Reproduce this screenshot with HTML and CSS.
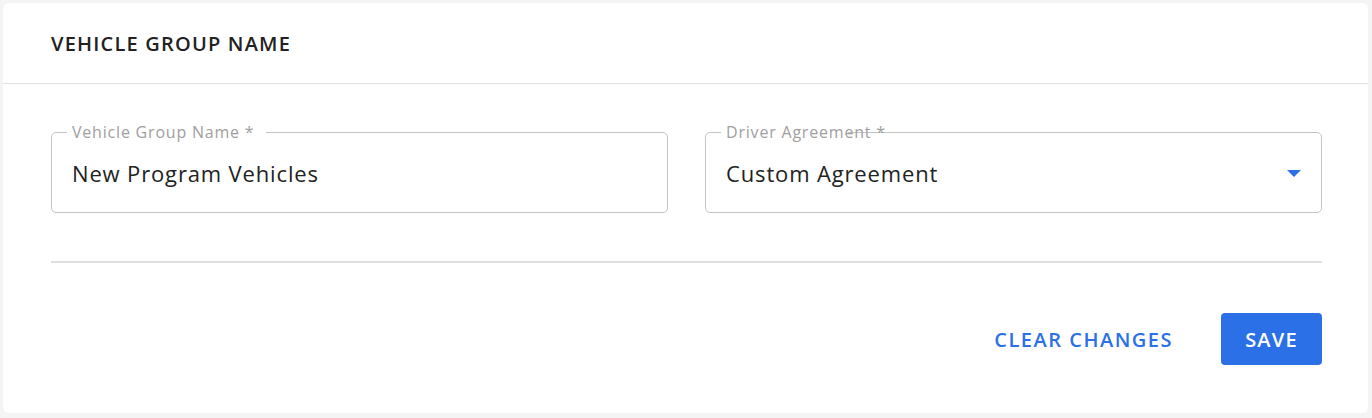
FILE: index.html
```html
<!DOCTYPE html>
<html lang="en">
<head>
  <meta charset="UTF-8">
  <title>Vehicle Group Name</title>
  <link rel="stylesheet" href="styles.css">
</head>
<body>

<div class="card">
  <div class="card-header">
    <h2>Vehicle Group Name</h2>
  </div>

  <div class="card-body">
    <div class="fields">
      <div class="field">
        <span class="notch notch-name"></span>
        <label>Vehicle Group Name *</label>
        <div class="value">New Program Vehicles</div>
      </div>

      <div class="field select">
        <span class="notch notch-driver"></span>
        <label>Driver Agreement *</label>
        <div class="value">Custom Agreement</div>
        <svg class="arrow" width="14" height="7" viewBox="0 0 14 7"><path d="M0 0h14L7 7z" fill="#2b70e7"/></svg>
      </div>
    </div>

    <div class="divider"></div>

    <div class="actions">
      <button class="btn-text">Clear Changes</button>
      <button class="btn-save">Save</button>
    </div>
  </div>
</div>

</body>
</html>
```

FILE: styles.css
```css
body {
  margin: 0;
  padding: 3px 4px 5px 3px;
  background: #f4f4f4;
  font-family: "Open Sans", sans-serif;
  color: #222;
}
.card {
  background: #fff;
  border-radius: 6px;
  height: 410px;
  box-sizing: border-box;
}
.card-header {
  height: 80px;
  border-bottom: 1px solid #e0e0e0;
  padding: 0 48px;
  display: flex;
  align-items: center;
}
.card-header h2 {
  margin: 0;
  font-size: 20px;
  font-weight: 600;
  letter-spacing: 1.2px;
  text-transform: uppercase;
  color: #222;
}
.card-body {
  padding: 48px 46px 0 48px;
}
.fields {
  display: grid;
  grid-template-columns: 1fr 1fr;
  gap: 37px;
}
.field {
  position: relative;
  height: 81px;
  border: 1px solid #c4c4c4;
  border-radius: 5px;
  box-sizing: border-box;
  display: flex;
  align-items: center;
  padding: 0 20px;
}
.notch {
  position: absolute;
  top: -2px;
  left: 15px;
  height: 3px;
  background: #fff;
}
.notch-name { width: 199px; }
.notch-driver { width: 127px; }
.field label {
  position: absolute;
  top: -11px;
  left: 20px;
  font-size: 16px;
  letter-spacing: 0.8px;
  color: #a0a0a0;
  line-height: 20px;
}
.value {
  font-size: 22px;
  letter-spacing: 0.85px;
  color: #222;
}
.arrow {
  position: absolute;
  right: 20px;
  top: 37px;
}
.divider {
  height: 2px;
  background: #e0e0e0;
  margin-top: 48px;
}
.actions {
  display: flex;
  justify-content: flex-end;
  align-items: center;
  gap: 48px;
  margin-top: 50px;
}
.btn-text, .btn-save {
  font-family: "Open Sans", sans-serif;
  font-size: 20px;
  font-weight: 600;
  letter-spacing: 1.2px;
  text-transform: uppercase;
  border: none;
  cursor: pointer;
}
.btn-text {
  background: none;
  color: #2b70e7;
  padding: 0;
  letter-spacing: 1.5px;
}
.btn-save {
  background: #2b70e7;
  color: #fff;
  border-radius: 4px;
  width: 101px;
  height: 52px;
}
```
